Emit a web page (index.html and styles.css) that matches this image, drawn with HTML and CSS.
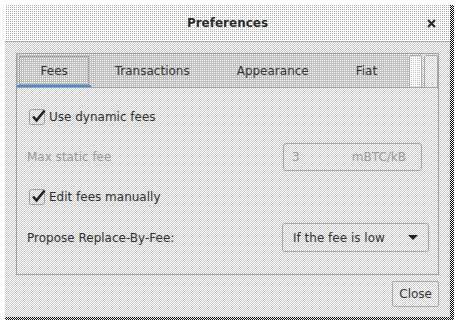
FILE: index.html
```html
<!DOCTYPE html>
<html lang="en">
<head>
    <meta charset="UTF-8">
    <title>Preferences</title>
    <link rel="stylesheet" href="styles.css">
</head>
<body>
    <div class="shadow">
        <div class="window">
            <div class="titlebar">
                <span></span>
                <span class="title">Preferences</span>
                <svg class="close-x" width="9" height="9" viewBox="0 0 9 9">
                    <path d="M1 1 L8 8 M8 1 L1 8" stroke="#2b2b2b" stroke-width="2.2" fill="none"/>
                </svg>
            </div>

            <div class="content">
                <div class="notebook">
                    <div class="tabs">
                        <div class="tab active">Fees</div>
                        <div class="tab">Transactions</div>
                        <div class="tab">Appearance</div>
                        <div class="tab">Fiat</div>
                        <div class="scroll-btns">
                            <div class="sbtn light"></div>
                            <div class="sbtn"></div>
                        </div>
                    </div>

                    <div class="page">
                        <div class="row">
                            <label class="check">
                                <svg width="16" height="16" viewBox="0 0 16 16">
                                    <rect x="0.5" y="0.5" width="15" height="15" rx="2" fill="none" stroke="#a3a3a3"/>
                                    <path d="M4 7.5 L7.5 11.5 L15.5 1.5" stroke="#222" stroke-width="2.6" fill="none"/>
                                </svg>
                                Use dynamic fees
                            </label>
                        </div>
                        <div class="row">
                            <span class="muted">Max static fee</span>
                            <div class="entry">
                                <span>3</span>
                                <span>mBTC/kB</span>
                            </div>
                        </div>
                        <div class="row">
                            <label class="check">
                                <svg width="16" height="16" viewBox="0 0 16 16">
                                    <rect x="0.5" y="0.5" width="15" height="15" rx="2" fill="none" stroke="#a3a3a3"/>
                                    <path d="M4 7.5 L7.5 11.5 L15.5 1.5" stroke="#222" stroke-width="2.6" fill="none"/>
                                </svg>
                                Edit fees manually
                            </label>
                        </div>
                        <div class="row">
                            <span>Propose Replace-By-Fee:</span>
                            <div class="combo">
                                <span>If the fee is low</span>
                                <svg width="10" height="5" viewBox="0 0 10 5">
                                    <path d="M0 0 L10 0 L5 5 Z" fill="#222"/>
                                </svg>
                            </div>
                        </div>
                    </div>
                </div>

                <div class="actions">
                    <button class="btn">Close</button>
                </div>
            </div>
        </div>
    </div>
</body>
</html>
```

FILE: styles.css
```css
body {
    margin: 0;
    background: #fff;
    font-family: 'DejaVu Sans', 'Liberation Sans', sans-serif;
    font-size: 12px;
    color: #303030;
}
.shadow {
    width: 445px;
    margin: 5px 0 0 5px;
    padding: 0 4px 3px 0;
    background: repeating-conic-gradient(#000 0 25%, transparent 0 50%) 0 0 / 2px 2px;
}
.window {
    width: 445px;
    height: 312px;
    display: flex;
    flex-direction: column;
    background: repeating-conic-gradient(#c6c6c6 0 25%, #fff 0 50%) 0 0 / 2px 2px;
}
.titlebar {
    height: 36px;
    flex: none;
    border-bottom: 1px solid #a8a8a8;
    display: grid;
    grid-template-columns: 1fr auto 1fr;
    align-items: center;
    background: conic-gradient(from 90deg at 1px 1px, #fff 0 75%, #b2b2b2 0) 0 0 / 2px 2px;
}
.title {
    font-size: 12px;
    font-weight: bold;
    color: #2b2b2b;
}
.close-x {
    justify-self: end;
    margin-right: 14px;
}
.content {
    flex: 1;
    padding: 11px 11px 0;
}
.notebook {
    border: 1px solid #a0a0a0;
}
.tabs {
    display: flex;
    height: 33px;
    border-bottom: 1px solid #a0a0a0;
    background: conic-gradient(from 90deg at 1px 1px, #bebebe 0 75%, #fff 0) 0 0 / 2px 2px;
}
.tab {
    padding: 0 23.5px;
    display: flex;
    align-items: center;
    color: #333;
}
.tab.active {
    box-shadow: inset 0 -2px #3d8ee0;
    outline: 1px dotted #8c8c8c;
    outline-offset: -3px;
}
.scroll-btns {
    margin-left: auto;
    display: flex;
    gap: 2px;
    padding-top: 1px;
    background: repeating-conic-gradient(#c6c6c6 0 25%, #fff 0 50%) 0 0 / 2px 2px;
}
.sbtn {
    width: 12px;
    height: 31px;
    border: 1px solid #a8a8a8;
    border-radius: 2px;
    background: repeating-conic-gradient(#cdcdcd 0 25%, #fff 0 50%) 0 0 / 2px 2px;
}
.sbtn.light {
    width: 11px;
    background: conic-gradient(from 90deg at 1px 1px, #fff 0 75%, #c0c0c0 0) 0 0 / 2px 2px;
}
.page {
    padding: 15px 9px 22px 10px;
    display: flex;
    flex-direction: column;
    gap: 12px;
}
.row {
    height: 28px;
    display: flex;
    align-items: center;
    justify-content: space-between;
}
.row:last-child {
    height: 29px;
}
.check {
    display: flex;
    align-items: center;
    gap: 4px;
    margin-left: 2px;
}
.check svg {
    overflow: visible;
}
.muted {
    color: #9a9a9a;
}
.entry {
    width: 114px;
    height: 26px;
    margin-right: 7px;
    border: 1px solid #a6a6a6;
    border-radius: 3px;
    display: flex;
    align-items: center;
    justify-content: space-between;
    padding: 0 15px 0 8px;
    color: #9a9a9a;
}
.combo {
    width: 125px;
    height: 27px;
    border: 1px solid #a6a6a6;
    border-radius: 3px;
    display: flex;
    align-items: center;
    justify-content: space-between;
    padding: 0 10px;
    color: #333;
}
.actions {
    display: flex;
    justify-content: flex-end;
    padding-top: 6px;
}
.btn {
    height: 26px;
    padding: 0 6px;
    border: 1px solid #a8a8a8;
    border-radius: 2px;
    font-family: inherit;
    font-size: 12px;
    color: #333;
    background: repeating-conic-gradient(#cdcdcd 0 25%, #fff 0 50%) 0 0 / 2px 2px;
}
```
